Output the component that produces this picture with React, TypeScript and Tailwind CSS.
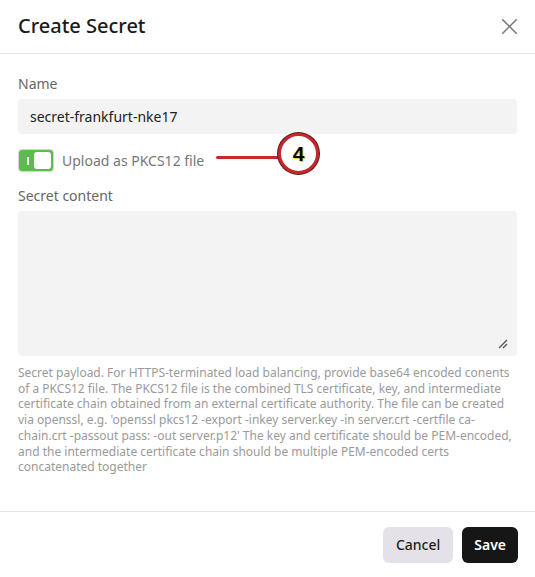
import { X } from "lucide-react";

const font = { fontFamily: '"Noto Sans", "Open Sans", sans-serif' };

export default function App() {
  return (
    <div className="w-[535px] h-[577px] bg-white flex flex-col text-[#222]" style={font}>
      {/* header */}
      <div className="h-[54px] flex items-center justify-between pl-[18px] pr-[12px] border-b border-[#e6e6e6] shrink-0">
        <div className="text-[20px] font-medium text-[#1a1a1a] mt-[-1px]">Create Secret</div>
        <X size={27} strokeWidth={1.4} className="text-[#777]" />
      </div>

      {/* body */}
      <div className="flex-1 px-[18px] pt-[21px]">
        <div className="text-[14px] text-[#666] leading-[18px]">Name</div>
        <div className="mt-[6px] h-[35px] rounded-[4px] bg-[#f3f3f3] flex items-center px-[12px] text-[14px] text-[#222]">
          secret-frankfurt-nke17
        </div>

        <div className="mt-[15px] flex items-center h-[23px] relative">
          <div className="w-[36px] h-[23px] rounded-[4px] border border-[#d6d6d6] bg-[#5bbd4e] flex items-center p-[2px] justify-end relative">
            <div className="absolute left-[8px] top-[7px] w-[2px] h-[8px] bg-white" />
            <div className="w-[17px] h-[17px] rounded-[3px] bg-white" />
          </div>
          <div className="ml-[8px] text-[14px] text-[#777]">Upload as PKCS12 file</div>
          {/* annotation callout */}
          <div className="absolute left-[198px] top-[-1px] h-[3px] w-[66px] bg-[#c8282d] rounded-full mt-[8px]" />
          <div className="absolute left-[260px] top-[-16px] w-[41px] h-[41px] rounded-full bg-white border-[3px] border-[#c8282d] shadow-[0_0_0_1px_#5a1a1a] flex items-center justify-center">
            <span
              className="text-[21px] font-bold text-black leading-none"
              style={{ fontFamily: '"Liberation Sans", Arial, sans-serif', textShadow: "1px 1px 0 #e8d23a" }}
            >
              4
            </span>
          </div>
        </div>

        <div className="mt-[15px] text-[14px] text-[#666] leading-[18px]">Secret content</div>
        <div className="mt-[6px] h-[145px] rounded-[4px] bg-[#f3f3f3] relative">
          <svg className="absolute right-[9px] bottom-[7px]" width="10" height="10" viewBox="0 0 10 10">
            <path d="M9 1 L1 9 M9 5 L5 9" stroke="#555" strokeWidth="1.3" />
          </svg>
        </div>
        <p className="mt-[9px] text-[12px] leading-[15.7px] text-[#9a9a9a]">
          Secret payload. For HTTPS-terminated load balancing, provide base64 encoded conents of a PKCS12 file. The PKCS12 file is the combined TLS certificate, key, and intermediate certificate chain obtained from an external certificate authority. The file can be created via openssl, e.g. 'openssl pkcs12 -export -inkey server.key -in server.crt -certfile ca-chain.crt -passout pass: -out server.p12' The key and certificate should be PEM-encoded, and the intermediate certificate chain should be multiple PEM-encoded certs concatenated together
        </p>
      </div>

      {/* footer */}
      <div className="h-[66px] border-t border-[#e6e6e6] flex items-center justify-end gap-[9px] px-[17px] shrink-0">
        <button className="h-[36px] px-[13px] rounded-[6px] bg-[#e4e2e8] text-[14px] font-medium text-[#222]">Cancel</button>
        <button className="h-[36px] px-[12px] rounded-[6px] bg-[#161616] text-[14px] font-semibold text-white">Save</button>
      </div>
    </div>
  );
}
